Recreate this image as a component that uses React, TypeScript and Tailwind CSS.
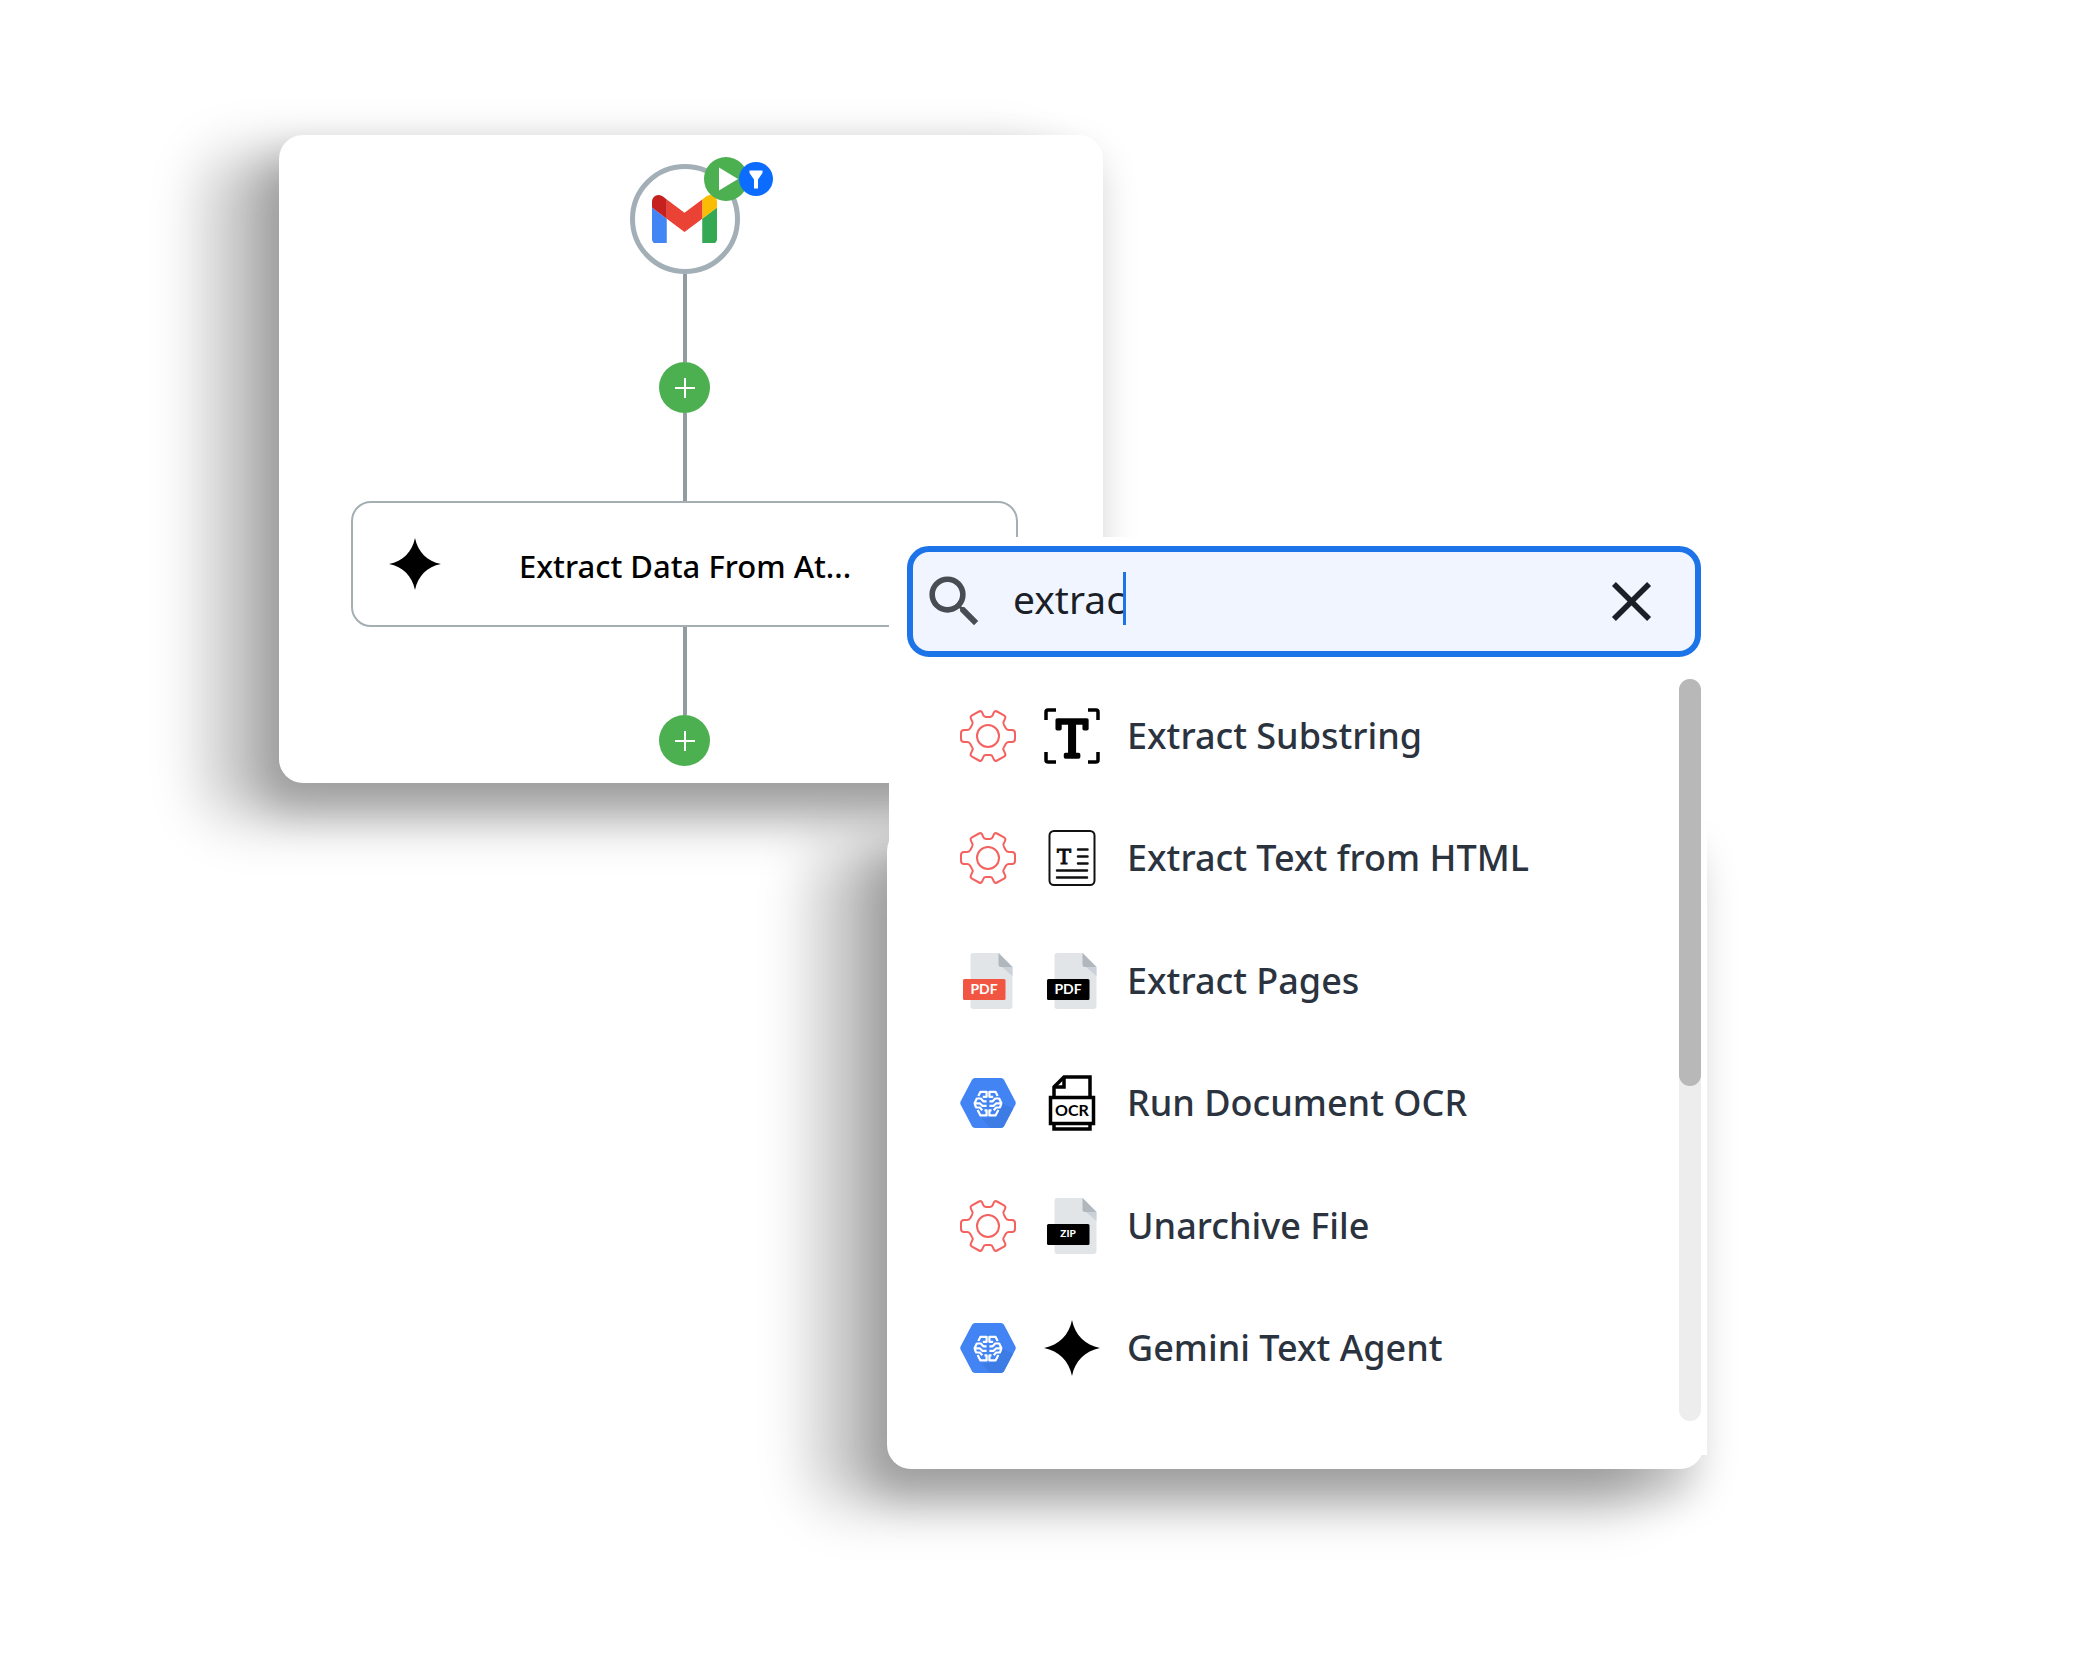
import type { ReactNode } from 'react';
import { MdClose, MdSearch } from 'react-icons/md';

function SparkIcon() {
  return (
    <svg viewBox="0 0 56 56" className="size-full" aria-hidden="true">
      <path d="M28 0C31 15 41 25 56 28C41 31 31 41 28 56C25 41 15 31 0 28C15 25 25 15 28 0Z" fill="#000" />
    </svg>
  );
}

function GmailIcon() {
  return (
    <svg viewBox="52 42 88 66" className="w-[65px]" aria-hidden="true">
      <path fill="#4285f4" d="M58 108h14V74L52 59v43c0 3.320 2.690 6 6 6" />
      <path fill="#34a853" d="M120 108h14c3.320 0 6-2.690 6-6V59l-20 15" />
      <path fill="#fbbc04" d="M120 48v26l20-15v-8c0-7.420-8.470-11.650-14.400-7.200" />
      <path fill="#ea4335" d="M72 74V48l24 18 24-18v26L96 92" />
      <path fill="#c5221f" d="M52 51v8l20 15V48l-5.600-4.200c-5.940-4.450-14.400-.22-14.400 7.200" />
    </svg>
  );
}

function GearIcon() {
  return (
    <svg viewBox="0 0 56 56" className="size-full" fill="none" stroke="#f4615f" strokeWidth="2" strokeLinejoin="round" aria-hidden="true">
      <circle cx="28" cy="28" r="11" />
      <path d="M19 3.500Q21 2.400 22 4.200L23.300 7.200Q24 9 26 9H30Q32 9 32.700 7.200L34 4.200Q35 2.400 37 3.500L44 7.300Q46 8.500 45.200 10.300L43.600 13.800Q42.800 15.400 44 17L46 20.500Q47 22 49 22H52Q55 22.200 55 25V31Q55 33.800 52 34H49Q47 34 46 35.500L44 39Q42.800 40.600 43.600 42.200L45.200 45.700Q46 47.500 44 48.700L37 52.500Q35 53.600 34 51.800L32.700 48.800Q32 47 30 47H26Q24 47 23.300 48.800L22 51.800Q21 53.600 19 52.500L12 48.700Q10 47.500 10.800 45.700L12.400 42.200Q13.200 40.600 12 39L10 35.500Q9 34 7 34H4Q1 33.800 1 31V25Q1 22.200 4 22H7Q9 22 10 20.500L12 17Q13.200 15.400 12.400 13.800L10.800 10.300Q10 8.500 12 7.300Z" />
    </svg>
  );
}

function SubstringIcon() {
  return (
    <svg viewBox="0 0 56 56" className="size-full overflow-visible" aria-hidden="true">
      <path
        d="M2 12V4Q2 2 4 2H12M44 2H52Q54 2 54 4V12M54 44V52Q54 54 52 54H44M12 54H4Q2 54 2 52V44"
        fill="none"
        stroke="#000"
        strokeWidth="3.500"
      />
      <text
        x="28"
        y="49"
        textAnchor="middle"
        stroke="#000"
        strokeWidth="3.500"
        strokeLinejoin="round"
        className="font-['DejaVu_Serif_Condensed','DejaVu_Serif',serif] text-[51px]"
      >
        T
      </text>
    </svg>
  );
}

function HtmlTextIcon() {
  return (
    <svg viewBox="0 0 56 56" className="size-full" aria-hidden="true">
      <rect x="5.500" y="1" width="45" height="54" rx="4.500" fill="none" stroke="#111" strokeWidth="2" />
      <path d="M34 19.500H43.500M34 26.500H43.500M34 33.500H43.500M13 40.500H43M13 47.500H43" stroke="#111" strokeWidth="2.500" strokeLinecap="round" />
      <text x="20" y="34" textAnchor="middle" stroke="#111" strokeWidth="1" className="font-['DejaVu_Serif',serif] text-[21px]">
        T
      </text>
    </svg>
  );
}

function FileIcon({ label, color }: { label: string; color: string }) {
  return (
    <svg viewBox="0 0 56 56" className="size-full" aria-hidden="true">
      <path d="M13 0H39L52.500 14V53Q52.500 56 49.500 56H13Q10.500 56 10.500 53V3Q10.500 0 13 0Z" fill="#e2e5e7" />
      <path d="M42 14L52.500 23V14Z" fill="#cad1d8" />
      <path d="M38.500 0L52.500 14H41Q38.500 14 38.500 11.500Z" fill="#b0b7bd" />
      <rect x="3" y="26" width="42.500" height="21" rx="1.500" fill={color} />
      <text
        x="24"
        y={label === 'ZIP' ? 39 : 41}
        textAnchor="middle"
        fill="#fff"
        className={label === 'ZIP' ? 'font-[Lato,sans-serif] text-[10px] font-black' : 'font-[Lato,sans-serif] text-[14px] font-bold'}
      >
        {label}
      </text>
    </svg>
  );
}

function OcrIcon() {
  return (
    <svg viewBox="0 0 56 56" className="size-full" fill="none" stroke="#000" strokeWidth="3.500" aria-hidden="true">
      <path d="M10 22V12L20 2H46V22M10 48V54H46V48" />
      <path d="M11 12H20V3" />
      <rect x="6.500" y="22.500" width="43" height="26" />
      <text x="28" y="41" textAnchor="middle" fill="#000" stroke="none" className="font-[Lato,sans-serif] text-[16px] font-bold">
        OCR
      </text>
    </svg>
  );
}

const brainHalf =
  'M18.300 21L20.500 16.800H26.600V21.800H22.800M26.600 26.300H23.300L20.800 23.500H16.800L14.600 28.300H19.800L22.300 30.800H26.600M14.600 29L16.200 32.500H19.800L22.300 35.200M17.600 35L20.500 40.400H26.600V35.300H24.500';

function GoogleAiIcon() {
  return (
    <svg viewBox="0 0 56 56" className="size-full" aria-hidden="true">
      <path d="M15 3H41Q43 3 44 4.700L55.300 26.200Q56.200 28 55.300 29.800L44 51.300Q43 53 41 53H15Q13 53 12 51.300L.7 29.800Q-.2 28 .7 26.200L12 4.700Q13 3 15 3Z" fill="#4284f3" />
      <path d="M42 28L37 41L22 44L30.500 53H41Q43 53 44 51.300L53 34Z" fill="#3a75dc" opacity=".6" />
      <g fill="none" stroke="#fff" strokeWidth="2.200" strokeLinejoin="round">
        <path d={brainHalf} />
        <path d={brainHalf} transform="translate(56 0) scale(-1 1)" />
      </g>
    </svg>
  );
}

function AddStepButton() {
  return (
    <button type="button" aria-label="Add step" className="flex size-[51px] items-center justify-center rounded-full bg-[#4caf50]">
      <svg viewBox="0 0 20 20" className="size-5" stroke="#fff" strokeWidth="2" aria-hidden="true">
        <path d="M10 0V20M0 10H20" />
      </svg>
    </button>
  );
}

function Connector() {
  return <div className="h-[88px] w-1 bg-[#929b9f]" />;
}

interface Result {
  label: string;
  app: ReactNode;
  action: ReactNode;
}

const results: Result[] = [
  { label: 'Extract Substring', app: <GearIcon />, action: <SubstringIcon /> },
  { label: 'Extract Text from HTML', app: <GearIcon />, action: <HtmlTextIcon /> },
  { label: 'Extract Pages', app: <FileIcon label="PDF" color="#f15642" />, action: <FileIcon label="PDF" color="#000" /> },
  { label: 'Run Document OCR', app: <GoogleAiIcon />, action: <OcrIcon /> },
  { label: 'Unarchive File', app: <GearIcon />, action: <FileIcon label="ZIP" color="#000" /> },
  { label: 'Gemini Text Agent', app: <GoogleAiIcon />, action: <SparkIcon /> },
];

function WorkflowCard() {
  return (
    <section className="flex w-full max-w-[824px] flex-col items-center rounded-3xl bg-white pt-[29px] pr-[13px] pb-[17px] shadow-[-12px_24px_40px_6px_rgba(0,0,0,0.22),-66px_28px_56px_8px_rgba(0,0,0,0.22)]">
      <div className="relative flex size-[110px] items-center justify-center rounded-full border-5 border-[#a2afb6]">
        <GmailIcon />
        <div className="absolute -top-3 -right-[38px] flex items-center">
          <span className="flex size-[44px] items-center justify-center rounded-full bg-[#4caf50]">
            <svg viewBox="0 0 44 44" className="size-full" aria-hidden="true">
              <path d="M15 10.500L34 22L15 33.500Z" fill="#fff" />
            </svg>
          </span>
          <span className="-ml-[9px] size-[34px] rounded-full bg-[#0b6cff]">
            <svg viewBox="0 0 34 34" className="size-full" aria-hidden="true">
              <path d="M10.500 8.500H23.500V11L19 17.500V26.500H15V17.500L10.500 11Z" fill="#fff" />
            </svg>
          </span>
        </div>
      </div>
      <Connector />
      <AddStepButton />
      <Connector />
      <div className="flex h-[126px] w-[667px] items-center rounded-[20px] border-2 border-[#a5aeb2] bg-white pl-9">
        <span className="size-[52px]">
          <SparkIcon />
        </span>
        <span className="ml-[78px] pt-1 text-[31px] leading-10 font-medium text-black">Extract Data From At...</span>
      </div>
      <Connector />
      <AddStepButton />
    </section>
  );
}

function SearchPanel() {
  return (
    <section className="relative isolate -mt-[246px] ml-[610px] w-full max-w-[818px]">
      {/* raised card behind the lower part of the list */}
      <div className="absolute top-[290px] right-[3px] -bottom-[14px] -left-0.5 -z-10 rounded-3xl bg-white shadow-[-12px_24px_40px_6px_rgba(0,0,0,0.22),-66px_28px_56px_8px_rgba(0,0,0,0.22)]" />
      <div className="bg-white pt-[9px] pr-1.5 pb-[34px] pl-[18px]">
        <form className="flex h-[111px] items-center rounded-[22px] border-6 border-[#1d74e8] bg-[#f1f5ff] pr-[30px] pl-2" onSubmit={(e) => e.preventDefault()}>
          <label htmlFor="action-search" aria-label="Search actions">
            <MdSearch className="size-[67px] text-[#484c53]" />
          </label>
          <div className="mb-1.5 ml-[25px] flex items-center">
            <input
              id="action-search"
              type="text"
              defaultValue="extrac"
              className="field-sizing-content text-[39px] leading-[52px] text-[#1b1f27] outline-none"
            />
            <span className="-ml-0.5 h-[53px] w-[3px] bg-[#1d74e8]" />
          </div>
          <button type="button" aria-label="Clear search" className="ml-auto">
            <MdClose className="size-[67px] text-[#1b1f27]" />
          </button>
        </form>
        <div className="mt-[22px] flex h-[742px] justify-between">
          <ul className="flex flex-1 flex-col justify-between pb-4">
            {results.map((item) => (
              <li key={item.label}>
                <button type="button" className="flex h-[114px] w-full items-center pl-[53px] text-left">
                  <span className="size-14">{item.app}</span>
                  <span className="ml-7 size-14">{item.action}</span>
                  <span className="ml-[27px] text-[36px] leading-[48px] font-medium text-[#2b333f]">{item.label}</span>
                </button>
              </li>
            ))}
          </ul>
          <div className="w-[22px] rounded-full bg-[#ededed]">
            <div className="h-[407px] rounded-full bg-[#b8b8b8]" />
          </div>
        </div>
      </div>
    </section>
  );
}

export default function App() {
  return (
    <main className="min-h-screen bg-white pt-[135px] pl-[279px] font-['Noto_Sans',sans-serif]">
      <WorkflowCard />
      <SearchPanel />
    </main>
  );
}
